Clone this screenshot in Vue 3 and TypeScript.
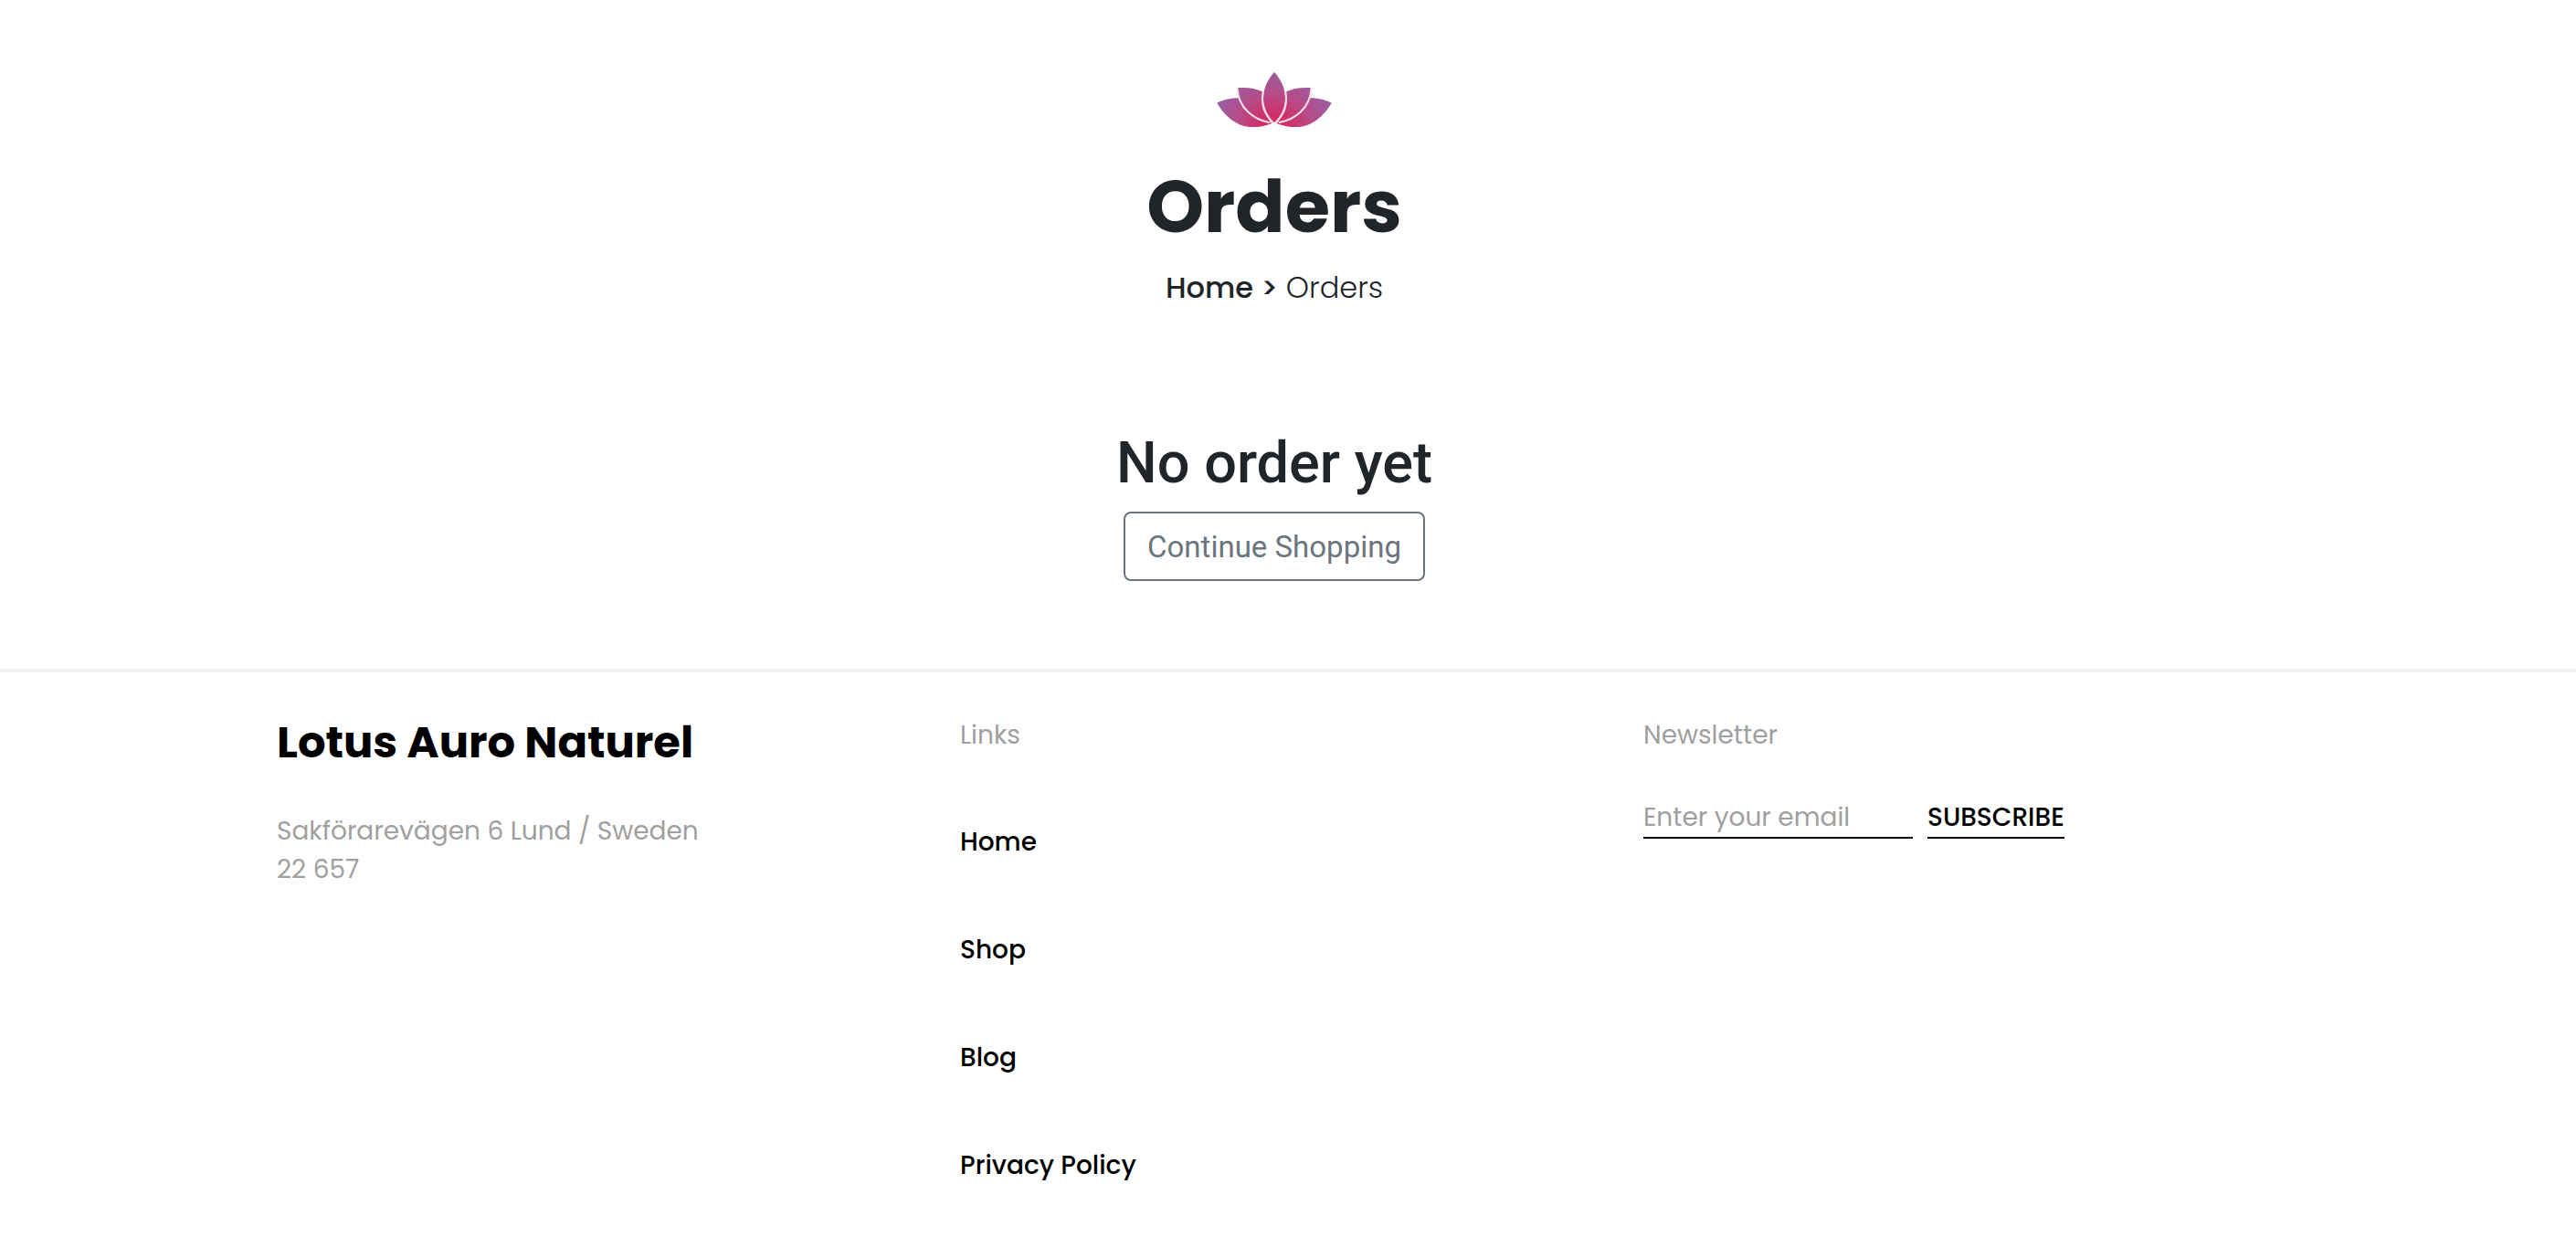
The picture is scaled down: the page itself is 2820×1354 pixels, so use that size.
<script setup lang="ts">
import { ref } from 'vue'

interface FooterLink {
  label: string
  href: string
}

const links: FooterLink[] = [
  { label: 'Home', href: '#home' },
  { label: 'Shop', href: '#shop' },
  { label: 'Blog', href: '#blog' },
  { label: 'Privacy Policy', href: '#privacy-policy' },
]

const email = ref('')
</script>

<template>
  <div class="page">
    <header class="banner">
      <svg class="logo" viewBox="0 0 510 300" role="img" aria-label="Lotus">
        <defs>
          <radialGradient id="petal" gradientUnits="userSpaceOnUse" cx="255" cy="235" r="190" gradientTransform="translate(0 23) scale(1 0.9)">
            <stop offset="0" stop-color="#da285d" />
            <stop offset="0.25" stop-color="#d03068" />
            <stop offset="0.6" stop-color="#b84a85" />
            <stop offset="1" stop-color="#9d5c9f" />
          </radialGradient>
        </defs>
        <g fill="url(#petal)" stroke="#f7dfea" stroke-width="11" paint-order="stroke">
          <path stroke="none" d="M67 158C90 147 112 142 142 142C150 179 186 213 250 224C226 234 204 237 182 237C134 237 92 202 67 158Z" />
          <path stroke="none" d="M443 158C420 147 398 142 368 142C360 179 324 213 260 224C284 234 306 237 328 237C376 237 418 202 443 158Z" />
          <path stroke="none" d="M135 109C164 106 192 110 216 121C213 158 220 196 244 221C186 210 137 174 135 109Z" />
          <path stroke="none" d="M375 109C346 106 318 110 294 121C297 158 290 196 266 221C324 210 373 174 375 109Z" />
          <path fill="none" stroke-width="6" d="M134 112C137 174 186 212 240 223" />
          <path fill="none" stroke-width="6" d="M376 112C373 174 324 212 270 223" />
          <path stroke="none" d="M255 56C303 110 303 176 255 223C207 176 207 110 255 56Z" />
          <path fill="none" stroke-width="6" d="M219 118C210 158 217 192 252 224" />
          <path fill="none" stroke-width="6" d="M291 118C300 158 293 192 258 224" />
        </g>
      </svg>
      <h1 class="title">Orders</h1>
      <nav class="crumbs" aria-label="Breadcrumb">
        <a class="crumb-link" href="#home">Home &gt;</a> <span>Orders</span>
      </nav>
    </header>

    <main class="empty">
      <h2 class="empty-title">No order yet</h2>
      <button class="continue" type="button">Continue Shopping</button>
    </main>

    <footer class="footer">
      <div class="columns">
        <section class="column">
          <h2 class="brand">Lotus Auro Naturel</h2>
          <address class="address">Sakförarevägen 6 Lund / Sweden<br />22 657</address>
        </section>

        <section class="column">
          <h3 class="label">Links</h3>
          <ul class="links">
            <li v-for="link in links" :key="link.label">
              <a class="link" :href="link.href">{{ link.label }}</a>
            </li>
          </ul>
        </section>

        <section class="column">
          <h3 class="label">Newsletter</h3>
          <form class="form" @submit.prevent>
            <input v-model="email" class="email" type="email" placeholder="Enter your email" aria-label="Email address" />
            <button class="subscribe" type="submit">SUBSCRIBE</button>
          </form>
        </section>
      </div>
    </footer>
  </div>
</template>

<style>
body {
  margin: 0;
  background: #ffffff;
}
</style>

<style scoped>
.page {
  font-family: Poppins, Inter, sans-serif;
  color: #212529;
}

h1,
h2,
h3,
ul {
  margin: 0;
  padding: 0;
}

a {
  color: inherit;
  text-decoration: none;
}

.banner,
.empty {
  display: flex;
  flex-direction: column;
  align-items: center;
  padding-right: 30px;
}

.banner {
  padding-top: 60px;
}

.logo {
  width: 170px;
  height: 100px;
}

.title {
  margin-top: 18px;
  font-size: 80px;
  font-weight: 700;
  line-height: 96px;
}

.crumbs {
  margin-top: 17px;
  font-size: 32px;
  font-weight: 300;
  line-height: 48px;
}

.crumb-link {
  font-weight: 500;
}

.empty {
  padding-top: 130px;
  padding-bottom: 96px;
  font-family: Roboto, sans-serif;
}

.empty-title {
  font-size: 63px;
  font-weight: 500;
  line-height: 76px;
}

.continue {
  margin-top: 15px;
  padding: 13px 24px 11px;
  border: 2px solid #6c757d;
  border-radius: 8px;
  background: transparent;
  color: #6c757d;
  font-family: inherit;
  font-size: 33px;
  line-height: 48px;
}

.footer {
  padding: 48px 30px 24px 0;
  border-top: 4px solid #f3f3f3;
}

.columns {
  display: grid;
  grid-template-columns: repeat(3, 1fr);
  max-width: 2244px;
  margin: 0 auto;
}

.column {
  padding: 0 30px;
}

.brand {
  color: #000000;
  font-size: 48px;
  font-weight: 700;
  line-height: 58px;
}

.address {
  margin-top: 47px;
  color: #a0a0a0;
  font-size: 28px;
  font-style: normal;
  line-height: 42px;
}

.label {
  color: #a0a0a0;
  font-size: 28px;
  font-weight: 400;
  line-height: 42px;
}

.links {
  display: flex;
  flex-direction: column;
  gap: 76px;
  margin-top: 75px;
  list-style: none;
}

.link {
  display: block;
  color: #000000;
  font-size: 28px;
  font-weight: 500;
  line-height: 42px;
}

.form {
  display: flex;
  gap: 16px;
  margin-top: 47px;
}

.email,
.subscribe {
  box-sizing: border-box;
  height: 45px;
  padding: 1px 0 0;
  border: 0;
  border-bottom: 2px solid #000000;
  border-radius: 0;
  background: transparent;
  color: #000000;
  font-family: inherit;
  font-size: 28px;
  line-height: 42px;
}

.email {
  width: 295px;
  outline: none;
}

.email::placeholder {
  color: #a0a0a0;
  opacity: 1;
}

.subscribe {
  font-weight: 500;
}
</style>
